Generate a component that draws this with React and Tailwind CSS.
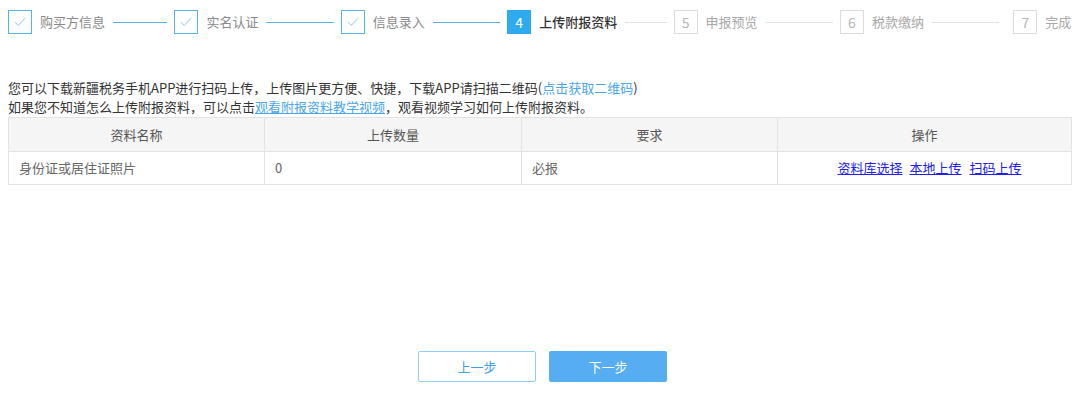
import React from "react";

const font = { fontFamily: '"Noto Sans CJK SC", "Noto Sans", sans-serif' };

function Check() {
  return (
    <svg width="12" height="10" viewBox="0 0 12 10" fill="none">
      <path d="M1 5.2 L4.3 8.4 L11 1.2" stroke="#8cc8f2" strokeWidth="1" />
    </svg>
  );
}

const steps = [
  { n: 1, label: "购买方信息", state: "done" },
  { n: 2, label: "实名认证", state: "done" },
  { n: 3, label: "信息录入", state: "done" },
  { n: 4, label: "上传附报资料", state: "active" },
  { n: 5, label: "申报预览", state: "todo" },
  { n: 6, label: "税款缴纳", state: "todo" },
  { n: 7, label: "完成", state: "todo" },
];

function Step({ s, last }) {
  const box =
    s.state === "done" ? (
      <div className="w-6 h-6 shrink-0 border border-[#55b4f0] flex items-center justify-center bg-white">
        <Check />
      </div>
    ) : s.state === "active" ? (
      <div className="w-6 h-6 shrink-0 bg-[#2eaaee] text-white text-[14px] flex items-center justify-center">
        {s.n}
      </div>
    ) : (
      <div className="w-6 h-6 shrink-0 border border-[#dcdcdc] text-[#b5b5b5] text-[14px] flex items-center justify-center bg-white">
        {s.n}
      </div>
    );
  const textColor =
    s.state === "active" ? "text-[#333] font-medium" : s.state === "done" ? "text-[#8a8a8a]" : "text-[#a8a8a8]";
  const lineColor = s.state === "done" ? "bg-[#55b4f0]" : "bg-[#e2e2e2]";
  return (
    <div className={last ? "flex items-center shrink-0 ml-[7px]" : "flex items-center w-[166.4px] shrink-0"}>
      {box}
      <span className={"ml-2 text-[13px] leading-6 whitespace-nowrap " + textColor}>{s.label}</span>
      {!last && <div className={"ml-2 mr-[7px] h-px flex-1 " + lineColor} />}
    </div>
  );
}

export default function App() {
  return (
    <div className="w-[1080px] h-[395px] bg-white overflow-hidden" style={font}>
      <div className="flex pl-2 pt-[10px]">
        {steps.map((s, i) => (
          <Step key={s.n} s={s} last={i === steps.length - 1} />
        ))}
      </div>

      <div className="mt-[44px] px-2 text-[13px] leading-[19px] text-[#333]">
        <p>
          您可以下载新疆税务手机APP进行扫码上传，上传图片更方便、快捷，下载APP请扫描二维码(
          <span className="text-[#4aa6ea]">点击获取二维码</span>)
        </p>
        <p>
          如果您不知道怎么上传附报资料，可以点击
          <span className="text-[#4aa6ea] underline">观看附报资料教学视频</span>
          ，观看视频学习如何上传附报资料。
        </p>
      </div>

      <div className="mt-px mx-2">
        <table className="w-[1064px] border-collapse text-[13px] table-fixed">
          <thead>
            <tr className="bg-[#f5f5f5] text-[#555]">
              <th className="w-[256px] h-[34px] border border-[#e3e3e3] font-normal">资料名称</th>
              <th className="w-[257px] border border-[#e3e3e3] font-normal">上传数量</th>
              <th className="w-[256px] border border-[#e3e3e3] font-normal">要求</th>
              <th className="border border-[#e3e3e3] font-normal">操作</th>
            </tr>
          </thead>
          <tbody>
            <tr className="text-[#666]">
              <td className="h-[33px] border border-[#e3e3e3] pl-[10px]">身份证或居住证照片</td>
              <td className="border border-[#e3e3e3] pl-[10px]">0</td>
              <td className="border border-[#e3e3e3] pl-[10px]">必报</td>
              <td className="border border-[#e3e3e3] text-center pl-[10px]">
                <span className="text-[#2020ee] underline">资料库选择</span>
                <span className="ml-[7px] text-[#2020ee] underline">本地上传</span>
                <span className="ml-[8px] text-[#2020ee] underline">扫码上传</span>
              </td>
            </tr>
          </tbody>
        </table>
      </div>

      <div className="mt-[166px] flex justify-center gap-[13px] pl-[5px]">
        <button className="w-[118px] h-[31px] rounded-[2px] border border-[#8fcdf6] bg-white text-[#3a9fe8] text-[13px]">
          上一步
        </button>
        <button className="w-[118px] h-[31px] rounded-[2px] bg-[#56adf1] text-white text-[13px]">
          下一步
        </button>
      </div>
    </div>
  );
}
